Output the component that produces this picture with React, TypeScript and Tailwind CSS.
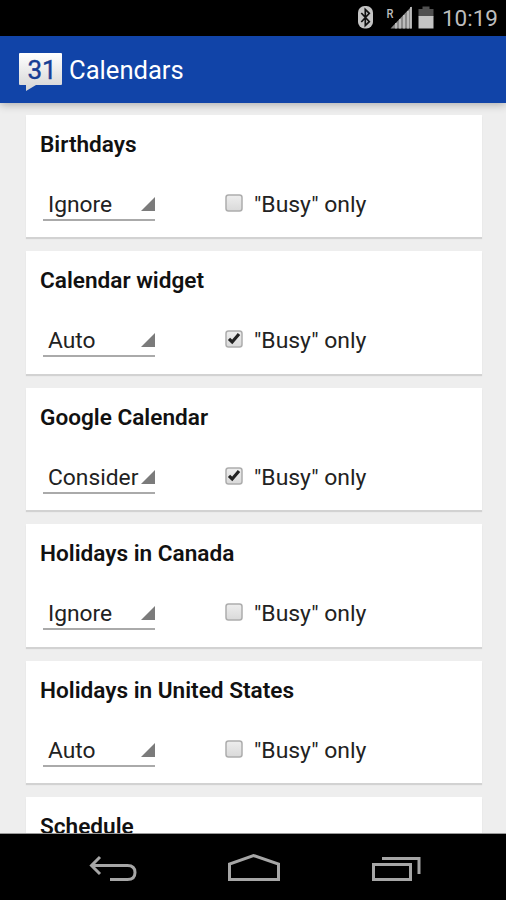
type Calendar = { name: string; mode: string; busy: boolean };

const calendars: Calendar[] = [
  { name: 'Birthdays', mode: 'Ignore', busy: false },
  { name: 'Calendar widget', mode: 'Auto', busy: true },
  { name: 'Google Calendar', mode: 'Consider', busy: true },
  { name: 'Holidays in Canada', mode: 'Ignore', busy: false },
  { name: 'Holidays in United States', mode: 'Auto', busy: false },
  { name: 'Schedule', mode: 'Ignore', busy: false },
];

function StatusBar() {
  return (
    <div className="flex h-9 shrink-0 items-center justify-end bg-black pr-2 text-[#bdbdbd]">
      <svg width="77" height="36" viewBox="0 0 77 36" className="mr-2">
        <rect x="0" y="6" width="15" height="22.500" rx="6.5" fill="#c4c4c4" />
        <path d="M3.300 13l8 8.600-4 3.900V9.500l4 3.900-8 8.600" fill="none" stroke="#111" strokeWidth="1.7" />
        <text x="28.500" y="17.500" fontSize="12.500" fontWeight="500" textLength="7" lengthAdjust="spacingAndGlyphs" fill="#bdbdbd">R</text>
        <path d="M32.500 28.500L53.500 6.500V28.500Z" fill="#8a8a8a" />
        <path d="M38 23v5.500M42 19v9.500M46 15v13.500M50 11v17.500M53 7v21.500" stroke="#c8c8c8" strokeWidth="1.6" />
        <path d="M60.500 9h4V6.500h7V9h4v7.500h-15z" fill="#505050" />
        <rect x="60.500" y="16" width="15" height="12.500" fill="#c4c4c4" />
      </svg>
      <span className="flex h-9 w-[55px] items-center justify-end text-[22.500px] leading-8">10:19</span>
    </div>
  );
}

function ActionBar() {
  return (
    <header className="z-10 flex h-[67px] shrink-0 items-center bg-[#1144a8] pl-[18px] text-white shadow-[0_1px_9px_rgba(0,0,0,0.32)]">
      <svg width="45" height="40" viewBox="0 0 45 40" className="mt-1 mr-1.5">
        <defs>
          <linearGradient id="bubble" x1="0" y1="0" x2="0" y2="1">
            <stop offset="0" stopColor="#fff" />
            <stop offset="1" stopColor="#d4d4d4" />
          </linearGradient>
        </defs>
        <path d="M2 1H43Q44 1 44 2V32Q44 33 43 33H18L8 39V33H2Q1 33 1 32V2Q1 1 2 1Z" fill="url(#bubble)" />
        <text x="9.500" y="26.500" fontSize="26" textLength="29" fill="#173e94" stroke="#173e94" strokeWidth="0.4">31</text>
      </svg>
      <h1 className="text-[25.600px] leading-8">Calendars</h1>
    </header>
  );
}

function Checkbox({ checked }: { checked: boolean }) {
  return (
    <svg width="18" height="18" viewBox="0 0 18 18" role="checkbox" aria-checked={checked}>
      <defs>
        <linearGradient id="box" x1="0" y1="0" x2="0" y2="1">
          <stop offset="0" stopColor="#eee" />
          <stop offset="1" stopColor="#d9d9d9" />
        </linearGradient>
      </defs>
      <rect x="1" y="1" width="16" height="16" rx="2.5" fill="url(#box)" stroke="#adadad" strokeWidth="1.5" />
      {checked && <path d="M4 8.800l3.200 3.200 6.800-8" fill="none" stroke="#222" strokeWidth="3.2" />}
    </svg>
  );
}

function CalendarCard({ name, mode, busy }: Calendar) {
  return (
    <section className="h-[122.400px] shrink-0 bg-white pl-[14px] shadow-[0_2px_1px_#d2d2d2]">
      <h2 className="pt-[14px] text-[22.600px] leading-8 font-semibold text-[#111]">{name}</h2>
      <div className="mt-[27px] flex items-start pl-[3px]">
        <div className="flex h-[33px] w-[112px] justify-between border-b-2 border-[#aaa] pl-[5px] text-[22.800px] leading-[34px] text-[#222]">
          <span>{mode}</span>
          <svg width="14" height="14" viewBox="0 0 14 14" className="mt-[9px] shrink-0">
            <path d="M14 0V14H0Z" fill="#7b7b7b" />
          </svg>
        </div>
        <label className="ml-[70px] flex h-8 gap-[11px] text-[22.950px] leading-[34px] text-[#222]">
          <span className="mt-[6px]"><Checkbox checked={busy} /></span>
          <span>"Busy" only</span>
        </label>
      </div>
    </section>
  );
}

function NavigationBar() {
  return (
    <nav className="h-[66px] shrink-0 bg-black">
      <svg width="506" height="66" viewBox="0 1 506 66" fill="none" stroke="#a6a6a6" strokeWidth="3">
        <path d="M100 24l-8.500 8.500 8.500 8.500M92 32.500h35.500q7.500 0 7.500 7t-7.500 7H110" />
        <path d="M229.500 46.500V31L253.500 22.500 278.500 31V46.500Z" />
        <path d="M373.500 31.500h37v15h-37zM382 25.500h37V41" />
      </svg>
    </nav>
  );
}

export default function App() {
  return (
    <div className="flex h-[900px] w-[506px] flex-col overflow-hidden bg-[#eee] font-[Roboto,sans-serif]">
      <StatusBar />
      <ActionBar />
      <main className="flex min-h-0 flex-1 flex-col gap-[14px] overflow-hidden border-b border-[#999] pt-3 pr-6 pl-[26px]">
        {calendars.map((calendar) => (
          <CalendarCard key={calendar.name} {...calendar} />
        ))}
      </main>
      <NavigationBar />
    </div>
  );
}
